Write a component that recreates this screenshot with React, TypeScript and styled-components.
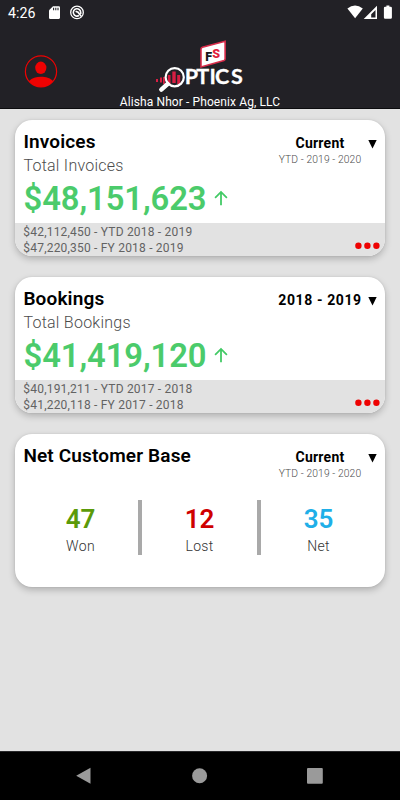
import React from 'react';
import styled, { createGlobalStyle } from 'styled-components';

const GlobalStyle = createGlobalStyle`
  * { box-sizing: border-box; }
  body { margin: 0; background: #e2e2e2; font-family: Roboto, "Liberation Sans", sans-serif; }
  svg { display: block; flex: none; }
`;

const Screen = styled.div`
  width: 400px;
  height: 800px;
  display: flex;
  flex-direction: column;
  overflow: hidden;
  background: #e2e2e2;
`;

const Header = styled.header`
  height: 109px;
  flex: none;
  background: #222126;
  border-bottom: 1px solid #0c0c0e;
  color: #fff;
`;

const StatusBar = styled.div`
  height: 25px;
  display: flex;
  align-items: center;
  padding: 0 7px 0 8px;
`;

const Clock = styled.span`
  width: 41px;
  font-size: 14.2px;
  line-height: 25px;
  padding-top: 1px;
`;

const StatusIcons = styled.div`
  display: flex;
  margin-left: auto;
`;

const Brand = styled.div`
  height: 68px;
  display: grid;
  grid-template-columns: 154px 92px 154px;
`;

const Profile = styled.div`
  padding: 29px 0 0 24px;
`;

const LogoSlot = styled.div`
  padding-top: 13px;
`;

const Account = styled.div`
  height: 16px;
  line-height: 18px;
  text-align: center;
  font-size: 12px;
  letter-spacing: 0.1px;
`;

const Content = styled.main`
  flex: 1;
  padding: 10.5px 15px 0;
  display: flex;
  flex-direction: column;
  gap: 20.5px;
`;

const Card = styled.section<{ $height: number }>`
  height: ${(p) => p.$height}px;
  flex: none;
  display: flex;
  flex-direction: column;
  overflow: hidden;
  border-radius: 17px;
  background: #fff;
  box-shadow: 0 3px 7px rgba(0, 0, 0, 0.22), 0 0 2px rgba(0, 0, 0, 0.1);
`;

const CardTop = styled.div`
  height: 61px;
  flex: none;
  display: flex;
  justify-content: space-between;
  padding: 11px 8px 0 8.4px;
`;

const Title = styled.h2`
  margin: 0;
  font-size: 19px;
  line-height: 22px;
  font-weight: 600;
  letter-spacing: 0.15px;
  color: #000;
`;

const Subtitle = styled.div`
  margin-top: 2px;
  font-size: 16px;
  line-height: 22px;
  font-weight: 300;
  letter-spacing: 0.25px;
  color: #4c4c4c;
`;

const Picker = styled.div`
  display: flex;
  padding-top: 4px;
`;

const PickerText = styled.div`
  width: 85px;
  margin-right: 5.5px;
  text-align: center;
  white-space: nowrap;
`;

const PickerValue = styled.div<{ $spacing: number }>`
  font-size: 14px;
  line-height: 17px;
  font-weight: 700;
  letter-spacing: ${(p) => p.$spacing}px;
  color: #000;
`;

const PickerNote = styled.div`
  font-size: 10.3px;
  line-height: 16px;
  font-weight: 300;
  letter-spacing: 0.1px;
  color: #4c4c4c;
`;

const Caret = styled.svg`
  margin-top: 5.5px;
`;

const Amount = styled.div`
  height: 42.5px;
  flex: none;
  display: flex;
  align-items: flex-start;
  gap: 8px;
  padding-left: 8.5px;
  font-size: 32.8px;
  line-height: 36px;
  font-weight: 600;
  letter-spacing: -0.1px;
  color: #4bcb6b;
  svg { margin-top: 9px; }
`;

const CardFooter = styled.div`
  flex: 1;
  display: flex;
  justify-content: space-between;
  padding: 0 5px 0 8.3px;
  background: #e2e2e2;
`;

const History = styled.div`
  padding-top: 1px;
  font-size: 12px;
  line-height: 16.3px;
  letter-spacing: 0.2px;
  color: #636363;
`;

const More = styled.svg`
  margin-top: 19px;
`;

const Stats = styled.div`
  display: flex;
  height: 55px;
  margin-top: 5px;
  padding: 0 9px 0 8px;
`;

const Stat = styled.div`
  box-sizing: content-box;
  flex: 1 1 0;
  text-align: center;
  & + & { border-left: 4px solid #a9a9a9; }
`;

const StatValue = styled.div<{ $color: string }>`
  padding-top: 3px;
  font-size: 26px;
  line-height: 32px;
  font-weight: 600;
  color: ${(p) => p.$color};
`;

const StatLabel = styled.div`
  font-size: 14px;
  line-height: 23px;
  font-weight: 300;
  letter-spacing: 0.3px;
  color: #333;
`;

const NavBar = styled.nav`
  height: 49px;
  flex: none;
  display: flex;
  justify-content: space-between;
  padding: 15px 76px 0 75px;
  background: #000;
  border-top: 1px solid #29292b;
`;

const Logo = () => (
  <svg width="92" height="55" viewBox="154 38 92 55">
    <path d="M201 49.2 Q201 47.8 202.4 47.3 L225.1 41.2 V59.1 Q225.1 60 224 60.4 L201 66.9Z" fill="#fff" stroke="#d92c4a" strokeWidth="1.6" />
    <text y="60.8" fontFamily="Roboto, sans-serif" fontWeight="900" fontSize="12.5">
      <tspan x="205.2" fill="#17171b">F</tspan>
      <tspan x="212.2" dy="-2.4" fill="#df1d3d">S</tspan>
    </text>
    <g fill="#d71e43">
      <rect x="156" y="79" width="2" height="3" />
      <rect x="160" y="77.5" width="2" height="5" />
      <rect x="163" y="77" width="1.8" height="7" />
      <rect x="167.8" y="75" width="2.7" height="9" />
      <rect x="172.3" y="71.5" width="3.4" height="11.5" />
      <rect x="177.2" y="75" width="3" height="9" />
    </g>
    <circle cx="174.7" cy="77.2" r="9.1" fill="none" stroke="#fff" strokeWidth="2.2" />
    <path d="M167.6 84 L161.3 89.6" stroke="#fff" strokeWidth="4.4" strokeLinecap="round" />
    <text x="184.7 196.2 209.5 215 231" y="84.2" fontFamily='Lato, "Open Sans", sans-serif' fontWeight="700" fontSize="21.5" fill="#fff" stroke="#fff" strokeWidth="0.3">PTICS</text>
  </svg>
);

const ProfileIcon = () => (
  <svg width="34" height="34" viewBox="0 0 34 34" fill="#ee0202">
    <circle cx="17" cy="17.4" r="15.6" fill="none" stroke="#ee0202" strokeWidth="1.2" />
    <ellipse cx="16.8" cy="13.8" rx="5.6" ry="6.2" />
    <path d="M4.8 27.2 C8.2 23.8 12 22.8 17 22.8 S25.8 23.8 29.2 27.2 A15.6 15.6 0 0 1 4.8 27.2Z" />
  </svg>
);

const SdCard = () => (
  <svg width="21" height="25" viewBox="0 0 21 25">
    <path d="M4 6.2 H9.8 Q11 6.2 11 7.4 V17.6 Q11 19 9.8 19 H1.2 Q0 19 0 17.8 V10.2Z" fill="#fff" />
    <path d="M4.6 7.7 V10.2 M6.8 7.7 V10.2 M9 7.7 V10.2" stroke="#222126" strokeWidth="1.1" />
  </svg>
);

const DebugIcon = () => (
  <svg width="14" height="25" viewBox="0 0 14 25" fill="none" stroke="#fff">
    <circle cx="7" cy="12.4" r="6.3" strokeWidth="1.3" />
    <path d="M9 15.5 A3.7 3.7 0 1 1 10.7 12.4 V14" strokeWidth="1.6" />
    <path d="M5.6 11.3 L8 12.2 L11.2 16.3" strokeWidth="1.7" />
  </svg>
);

const Indicators = () => (
  <svg width="47" height="25" viewBox="346 0 47 25" fill="#fff">
    <path d="M347.4 8.6 Q355 2.6 362.8 8.6 L355.1 18.3Z" />
    <path fillRule="evenodd" d="M377 5.7 V19 H363.7Z M375.5 10 L371.2 14.3 V17.6 H375.5Z" />
    <path d="M386.4 5.4 h3 v1.3 h1.3 q1.2 0 1.2 1.2 v9.7 q0 1.2 -1.2 1.2 h-5.6 q-1.2 0 -1.2 -1.2 v-9.7 q0 -1.2 1.2 -1.2 h1.3z" />
  </svg>
);

const UpArrow = () => (
  <svg width="14" height="16" viewBox="0 0 14 16" fill="none" stroke="#43ca66" strokeWidth="1.8">
    <path d="M7 15.2 V2 M1.1 7.8 L7 1.9 L12.9 7.8" />
  </svg>
);

type PeriodProps = { value: string; note?: string; spacing?: number };

const Period = ({ value, note, spacing = 0.25 }: PeriodProps) => (
  <Picker>
    <PickerText>
      <PickerValue $spacing={spacing}>{value}</PickerValue>
      {note && <PickerNote>{note}</PickerNote>}
    </PickerText>
    <Caret width="9" height="9" viewBox="0 0 9 9"><path d="M0.3 0 H8.7 L4.5 8.5Z" /></Caret>
  </Picker>
);

type TotalsProps = { title: string; subtitle: string; amount: string; history: string[]; period: PeriodProps };

const TotalsCard = ({ title, subtitle, amount, history, period }: TotalsProps) => (
  <Card $height={136.5}>
    <CardTop>
      <div>
        <Title>{title}</Title>
        <Subtitle>{subtitle}</Subtitle>
      </div>
      <Period {...period} />
    </CardTop>
    <Amount><span>{amount}</span><UpArrow /></Amount>
    <CardFooter>
      <History>{history.map((line) => <div key={line}>{line}</div>)}</History>
      <More width="25" height="8" viewBox="0 0 25 8" fill="#ee0202">
        <circle cx="3.4" cy="3.8" r="3.2" /><circle cx="12.4" cy="3.8" r="3.2" /><circle cx="21.4" cy="3.8" r="3.2" />
      </More>
    </CardFooter>
  </Card>
);

const stats = [
  { value: '47', label: 'Won', color: '#5b9a09' },
  { value: '12', label: 'Lost', color: '#cf0000' },
  { value: '35', label: 'Net', color: '#1fafe8' },
];

export default function App() {
  return (
    <Screen>
      <GlobalStyle />
      <Header>
        <StatusBar>
          <Clock>4:26</Clock>
          <SdCard />
          <DebugIcon />
          <StatusIcons><Indicators /></StatusIcons>
        </StatusBar>
        <Brand>
          <Profile><ProfileIcon /></Profile>
          <LogoSlot><Logo /></LogoSlot>
        </Brand>
        <Account>Alisha Nhor - Phoenix Ag, LLC</Account>
      </Header>
      <Content>
        <TotalsCard
          title="Invoices"
          subtitle="Total Invoices"
          amount="$48,151,623"
          history={['$42,112,450 - YTD 2018 - 2019', '$47,220,350 - FY 2018 - 2019']}
          period={{ value: 'Current', note: 'YTD - 2019 - 2020' }}
        />
        <TotalsCard
          title="Bookings"
          subtitle="Total Bookings"
          amount="$41,419,120"
          history={['$40,191,211 - YTD 2017 - 2018', '$41,220,118 - FY 2017 - 2018']}
          period={{ value: '2018 - 2019', spacing: 0.6 }}
        />
        <Card $height={153}>
          <CardTop>
            <Title>Net Customer Base</Title>
            <Period value="Current" note="YTD - 2019 - 2020" />
          </CardTop>
          <Stats>
            {stats.map((s) => (
              <Stat key={s.label}>
                <StatValue $color={s.color}>{s.value}</StatValue>
                <StatLabel>{s.label}</StatLabel>
              </Stat>
            ))}
          </Stats>
        </Card>
      </Content>
      <NavBar>
        <svg width="16" height="18" viewBox="0 0 16 18"><path d="M1.2 8.8 L15.5 0.8 V16.8Z" fill="#9a9a9a" /></svg>
        <svg width="18" height="18" viewBox="0 0 18 18"><circle cx="9.6" cy="8.8" r="7.5" fill="#9a9a9a" /></svg>
        <svg width="17" height="18" viewBox="0 0 17 18"><rect x="0" y="1" width="15.8" height="15.8" rx="1" fill="#9a9a9a" /></svg>
      </NavBar>
    </Screen>
  );
}
